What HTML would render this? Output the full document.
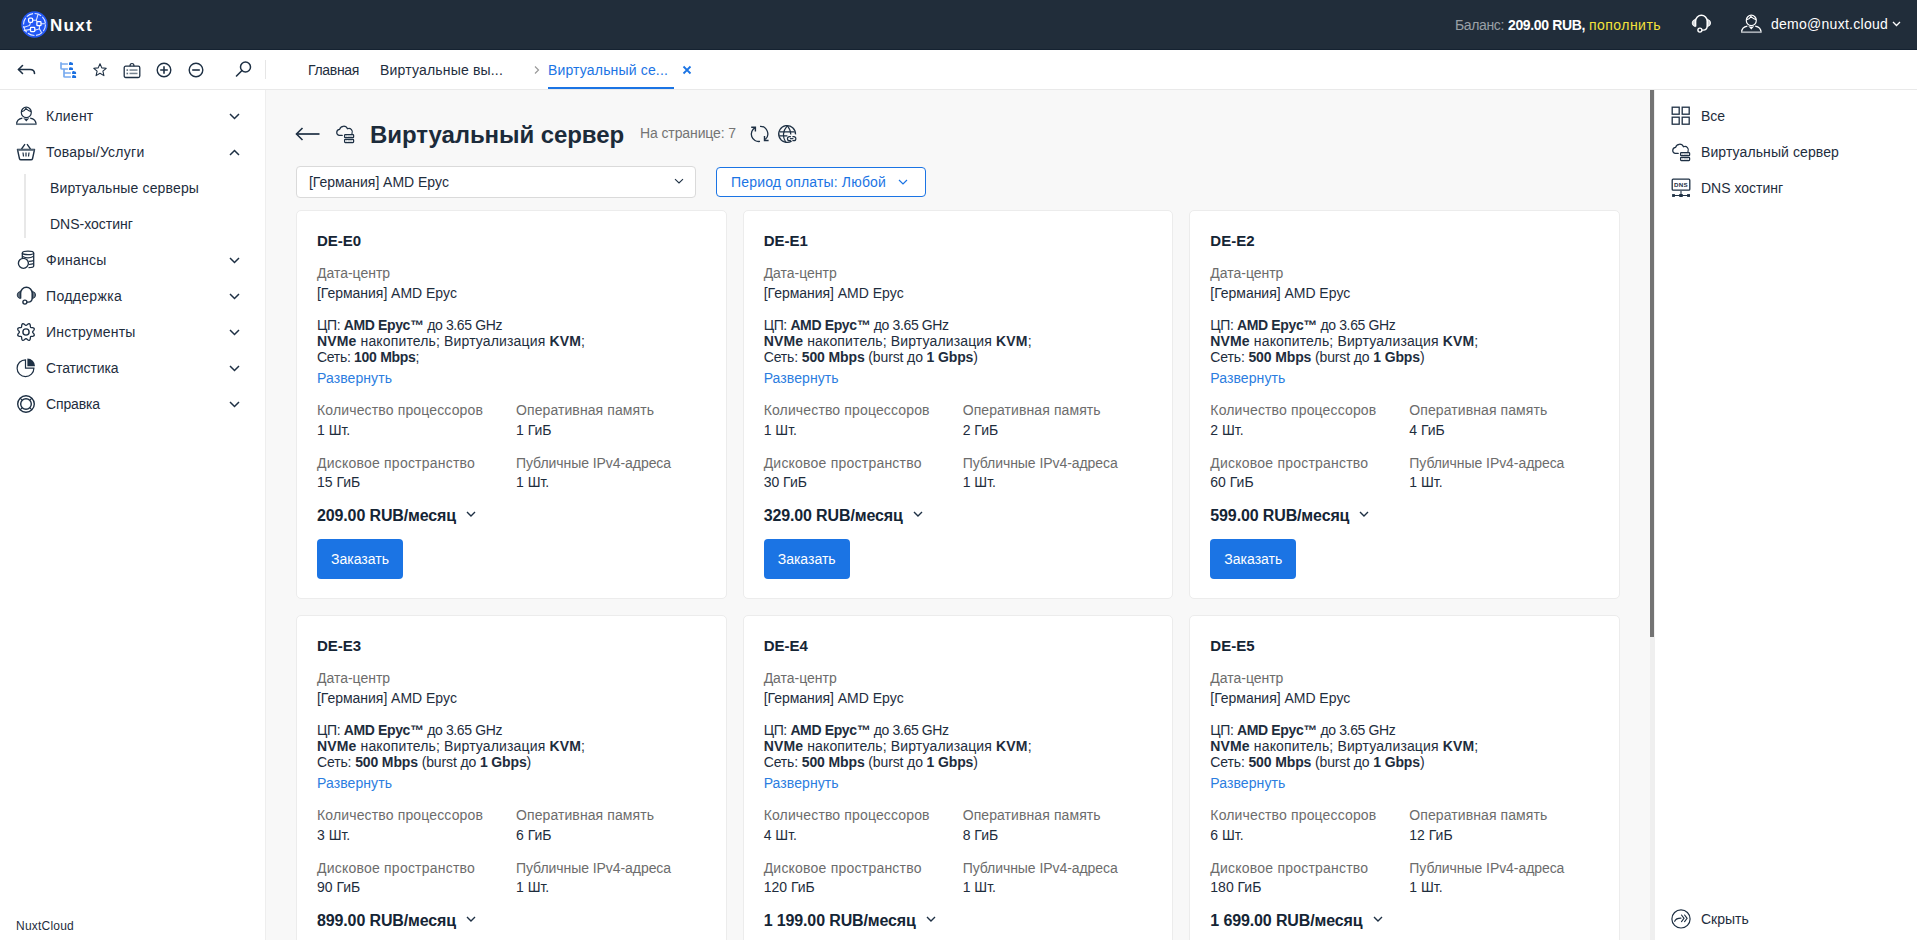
<!DOCTYPE html><html><head><meta charset="utf-8"><style>
*{box-sizing:border-box;margin:0;padding:0}
html,body{width:1917px;height:940px;overflow:hidden;background:#fff;font-family:"Liberation Sans",sans-serif;color:#1e2d3d;font-size:14px}
.abs{position:absolute}
.t{position:absolute;white-space:nowrap}
svg{position:absolute;overflow:visible}
b{font-weight:700}
</style></head><body>
<div class="abs" style="left:0px;top:0px;width:1917px;height:50px;background:#212d3a"></div>
<div class="abs" style="left:0px;top:49px;width:1917px;height:1px;background:#152231"></div>
<div class="abs" style="left:0px;top:50px;width:1917px;height:39px;background:#fff"></div>
<div class="abs" style="left:0px;top:89px;width:1917px;height:1px;background:#e9e9e9"></div>
<div class="abs" style="left:0px;top:90px;width:265px;height:850px;background:#fff"></div>
<div class="abs" style="left:265px;top:90px;width:1px;height:850px;background:#eeeeee"></div>
<div class="abs" style="left:266px;top:90px;width:1384px;height:850px;background:#f8f8f8"></div>
<div class="abs" style="left:1650px;top:90px;width:5px;height:850px;background:#efefef"></div>
<div class="abs" style="left:1650px;top:90px;width:4px;height:547px;background:#737373"></div>
<div class="abs" style="left:1655px;top:90px;width:262px;height:850px;background:#fff"></div>
<svg style="left:21px;top:11px;" width="27" height="27" viewBox="0 0 27 27"><circle cx="13.5" cy="13.5" r="13.2" fill="#2358f5"/><circle cx="13.5" cy="13.5" r="11" fill="none" stroke="#dfe6ff" stroke-width="1.1" stroke-dasharray="7 1.6"/><path d="M11.8 9.2 H15.3 L17.2 2.8 M15.3 9.2 L16.2 10.6 M20.1 12.7 H24.6 M18.4 14.8 V17.8 L20.5 21.5 M9.4 18.4 L2.8 19.6 M13.8 19.2 L17 18.3 L18.4 17.8 M9.6 11.4 L8.6 14.4 L2.4 16.6" stroke="#dfe6ff" stroke-width="1.1" fill="none"/><rect x="7.6" y="7.2" width="4.1" height="4.1" rx="1.2" fill="#2358f5" stroke="#fff" stroke-width="1.3"/><rect x="15.9" y="10.6" width="4.1" height="4.1" rx="0.8" fill="#2358f5" stroke="#fff" stroke-width="1.3"/><rect x="9.5" y="16.4" width="4.3" height="4.2" rx="0.8" fill="#2358f5" stroke="#fff" stroke-width="1.3"/></svg>
<div class="t" style="left:50px;top:17px;font-size:17px;line-height:17px;font-weight:700;color:#ffffff;letter-spacing:1.305px;">Nuxt</div>
<div class="t" style="left:1455px;top:18px;font-size:14px;line-height:14px;font-weight:400;color:#9aa0a6;letter-spacing:-0.364px;">Баланс:</div>
<div class="t" style="left:1508px;top:18px;font-size:14px;line-height:14px;font-weight:700;color:#ffffff;letter-spacing:-0.355px;">209.00 RUB,</div>
<div class="t" style="left:1589px;top:18px;font-size:14px;line-height:14px;font-weight:400;color:#f3e23b;letter-spacing:0.462px;">пополнить</div>
<svg style="left:1692px;top:15px;" width="19" height="18" viewBox="0 0 19 18"><path d="M3.6 11.6 V6.1 A5.8 5.8 0 0 1 15.2 6.1 V11.3" fill="none" stroke="#ffffff" stroke-width="1.5"/><path d="M3.3 4.4 Q0.2 5.1 0.2 8 Q0.2 10.9 3.3 11.6 Z M15.5 4.4 Q18.6 5.1 18.6 8 Q18.6 10.9 15.5 11.6 Z" fill="#d0d4d8" stroke="#ffffff" stroke-width="0.9"/><path d="M15.2 11 Q15.2 15.1 11.2 15.1 H10" fill="none" stroke="#ffffff" stroke-width="1.4"/><circle cx="7.9" cy="15.1" r="2" fill="none" stroke="#ffffff" stroke-width="1.4"/></svg>
<svg style="left:1741px;top:15px;" width="20" height="18" viewBox="0 0 20 18"><ellipse cx="10.3" cy="5.4" rx="5" ry="5.2" fill="none" stroke="#ffffff" stroke-width="1.2"/><path d="M5.8 4.6 Q8.6 4 9.8 1.4 Q12.2 3.9 15.2 4.6" fill="none" stroke="#ffffff" stroke-width="1.1"/><path d="M0.6 17.4 Q0.6 12 6.4 11.1 M14.2 11.1 Q20 12 20 17.4" fill="none" stroke="#ffffff" stroke-width="1.3"/><path d="M0.2 17.2 H20.4" stroke="#a7adb4" stroke-width="1.7"/><path d="M7.2 11.1 L10.3 14.6 L13.4 11.1 Q10.3 12.6 7.2 11.1 Z" fill="#ffffff"/></svg>
<div class="t" style="left:1771px;top:17px;font-size:14px;line-height:14px;font-weight:400;color:#ffffff;letter-spacing:0.266px;">demo@nuxt.cloud</div>
<svg style="left:1892px;top:21px;" width="9" height="6" viewBox="0 0 9 6"><path d="M1 1 L4.5 4.5 L8 1" fill="none" stroke="#fff" stroke-width="1.3"/></svg>
<svg style="left:16px;top:63px;" width="20" height="16" viewBox="0 0 20 16"><path d="M2.5 6.5 H14 Q18.5 6.5 18.5 10.5" fill="none" stroke="#1e3044" stroke-width="1.6" stroke-linecap="round"/><path d="M6.5 2.5 L2.5 6.5 L6.5 10.5" fill="none" stroke="#1e3044" stroke-width="1.6" stroke-linecap="round" stroke-linejoin="round"/></svg>
<svg style="left:56px;top:58px;" width="24" height="24" viewBox="0 0 24 24"><path d="M5 4.2 V10.2 Q5 11 6 11 H11.9 M5 6 H11.9 M8 11 V18.7 Q8 19 9 19 H14.9 M8 15 H14.9" fill="none" stroke="#78abef" stroke-width="1.7"/><path d="M13 6.8999999999999995 V5.3999999999999995 Q13 4.1 14.6 4.1 Q15.2 3.9999999999999996 15.6 4.5 Q17 4.5 17 5.699999999999999 V6.8999999999999995 Z" fill="#1a6fe0"/><path d="M13 12.0 V10.5 Q13 9.2 14.6 9.2 Q15.2 9.1 15.6 9.6 Q17 9.6 17 10.799999999999999 V12.0 Z" fill="#1a6fe0"/><path d="M16.1 15.899999999999999 V14.4 Q16.1 13.1 17.700000000000003 13.1 Q18.3 13.0 18.700000000000003 13.5 Q20.1 13.5 20.1 14.7 V15.899999999999999 Z" fill="#1a6fe0"/><path d="M16.1 19.900000000000002 V18.400000000000002 Q16.1 17.1 17.700000000000003 17.1 Q18.3 17.0 18.700000000000003 17.5 Q20.1 17.5 20.1 18.700000000000003 V19.900000000000002 Z" fill="#1a6fe0"/></svg>
<svg style="left:92px;top:62px;" width="16" height="16" viewBox="0 0 16 16"><path d="M8 1.8 L9.8 5.9 L14.2 6.3 L10.9 9.2 L11.9 13.6 L8 11.3 L4.1 13.6 L5.1 9.2 L1.8 6.3 L6.2 5.9 Z" fill="none" stroke="#1e3044" stroke-width="1.1" stroke-linejoin="round"/></svg>
<svg style="left:123px;top:62px;" width="18" height="17" viewBox="0 0 18 17"><rect x="1.2" y="4.2" width="15.6" height="11.3" rx="1.5" fill="none" stroke="#1e3044" stroke-width="1.3"/><path d="M7 4.2 Q7 1.5 9 1.5 Q11 1.5 11 4.2" fill="none" stroke="#1e3044" stroke-width="1.2"/><rect x="3.5" y="7.3" width="1.6" height="1.6" fill="#5b6b7a"/><rect x="3.5" y="10.7" width="1.6" height="1.6" fill="#5b6b7a"/><rect x="6.5" y="7.3" width="8" height="1.5" fill="#76838f"/><rect x="6.5" y="10.7" width="8" height="1.5" fill="#76838f"/></svg>
<svg style="left:156px;top:62px;" width="16" height="16" viewBox="0 0 16 16"><circle cx="8" cy="8" r="6.8" fill="none" stroke="#1e3044" stroke-width="1.4"/><path d="M4.2 8 H11.8 M8 4.2 V11.8" stroke="#1e3044" stroke-width="1.6"/></svg>
<svg style="left:188px;top:62px;" width="16" height="16" viewBox="0 0 16 16"><circle cx="8" cy="8" r="6.8" fill="none" stroke="#1e3044" stroke-width="1.4"/><path d="M4.2 8 H11.8" stroke="#1e3044" stroke-width="1.6"/></svg>
<svg style="left:235px;top:60px;" width="18" height="18" viewBox="0 0 18 18"><circle cx="10.5" cy="7" r="5" fill="none" stroke="#1e3044" stroke-width="1.5"/><path d="M7 10.5 L1.5 16" stroke="#1e3044" stroke-width="1.6" stroke-linecap="round"/></svg>
<div class="abs" style="left:265px;top:60px;width:1px;height:19px;background:#e6e6e6"></div>
<div class="t" style="left:308px;top:63px;font-size:14px;line-height:14px;font-weight:400;color:#1e2d3d;letter-spacing:-0.326px;">Главная</div>
<div class="t" style="left:380px;top:63px;font-size:14px;line-height:14px;font-weight:400;color:#1e2d3d;letter-spacing:0.180px;">Виртуальные вы...</div>
<svg style="left:533px;top:65px;" width="8" height="10" viewBox="0 0 8 10"><path d="M2 1.5 L5.5 5 L2 8.5" fill="none" stroke="#9a9a9a" stroke-width="1.2"/></svg>
<div class="t" style="left:548px;top:63px;font-size:14px;line-height:14px;font-weight:400;color:#1b74e4;letter-spacing:0.161px;">Виртуальный се...</div>
<svg style="left:682px;top:65px;" width="10" height="10" viewBox="0 0 10 10"><path d="M1.5 1.5 L8.5 8.5 M8.5 1.5 L1.5 8.5" stroke="#1b74e4" stroke-width="1.8"/></svg>
<div class="abs" style="left:548px;top:87px;width:126px;height:2px;background:#1b74e4"></div>
<div class="t" style="left:46px;top:109px;font-size:14px;line-height:14px;font-weight:400;color:#1e2d3d;letter-spacing:0.237px;">Клиент</div>
<div class="t" style="left:46px;top:145px;font-size:14px;line-height:14px;font-weight:400;color:#1e2d3d;letter-spacing:0.262px;">Товары/Услуги</div>
<div class="t" style="left:46px;top:253px;font-size:14px;line-height:14px;font-weight:400;color:#1e2d3d;letter-spacing:0.246px;">Финансы</div>
<div class="t" style="left:46px;top:289px;font-size:14px;line-height:14px;font-weight:400;color:#1e2d3d;letter-spacing:0.332px;">Поддержка</div>
<div class="t" style="left:46px;top:325px;font-size:14px;line-height:14px;font-weight:400;color:#1e2d3d;letter-spacing:0.202px;">Инструменты</div>
<div class="t" style="left:46px;top:361px;font-size:14px;line-height:14px;font-weight:400;color:#1e2d3d;letter-spacing:-0.102px;">Статистика</div>
<div class="t" style="left:46px;top:397px;font-size:14px;line-height:14px;font-weight:400;color:#1e2d3d;letter-spacing:-0.129px;">Справка</div>
<svg style="left:229px;top:113px;" width="11" height="7" viewBox="0 0 11 7"><path d="M1 1 L5.5 5.5 L10 1" fill="none" stroke="#1e3044" stroke-width="1.5"/></svg>
<svg style="left:229px;top:257px;" width="11" height="7" viewBox="0 0 11 7"><path d="M1 1 L5.5 5.5 L10 1" fill="none" stroke="#1e3044" stroke-width="1.5"/></svg>
<svg style="left:229px;top:293px;" width="11" height="7" viewBox="0 0 11 7"><path d="M1 1 L5.5 5.5 L10 1" fill="none" stroke="#1e3044" stroke-width="1.5"/></svg>
<svg style="left:229px;top:329px;" width="11" height="7" viewBox="0 0 11 7"><path d="M1 1 L5.5 5.5 L10 1" fill="none" stroke="#1e3044" stroke-width="1.5"/></svg>
<svg style="left:229px;top:365px;" width="11" height="7" viewBox="0 0 11 7"><path d="M1 1 L5.5 5.5 L10 1" fill="none" stroke="#1e3044" stroke-width="1.5"/></svg>
<svg style="left:229px;top:401px;" width="11" height="7" viewBox="0 0 11 7"><path d="M1 1 L5.5 5.5 L10 1" fill="none" stroke="#1e3044" stroke-width="1.5"/></svg>
<svg style="left:229px;top:149px;" width="11" height="7" viewBox="0 0 11 7"><path d="M1 6 L5.5 1.5 L10 6" fill="none" stroke="#1e3044" stroke-width="1.5"/></svg>
<div class="abs" style="left:24px;top:174px;width:2px;height:64px;background:#e8e8e8"></div>
<div class="t" style="left:50px;top:181px;font-size:14px;line-height:14px;font-weight:400;color:#1e2d3d;letter-spacing:0.146px;">Виртуальные серверы</div>
<div class="t" style="left:50px;top:217px;font-size:14px;line-height:14px;font-weight:400;color:#1e2d3d;">DNS-хостинг</div>
<div class="t" style="left:16px;top:920px;font-size:12px;line-height:12px;font-weight:400;color:#1e2d3d;letter-spacing:0.219px;">NuxtCloud</div>
<svg style="left:16px;top:107px;" width="20" height="18" viewBox="0 0 20 18"><ellipse cx="10.3" cy="5.4" rx="5" ry="5.2" fill="none" stroke="#1e3044" stroke-width="1.2"/><path d="M5.8 4.6 Q8.6 4 9.8 1.4 Q12.2 3.9 15.2 4.6" fill="none" stroke="#1e3044" stroke-width="1.1"/><path d="M0.6 17.4 Q0.6 12 6.4 11.1 M14.2 11.1 Q20 12 20 17.4" fill="none" stroke="#1e3044" stroke-width="1.3"/><path d="M0.2 17.2 H20.4" stroke="#5e6e7d" stroke-width="1.7"/><path d="M7.2 11.1 L10.3 14.6 L13.4 11.1 Q10.3 12.6 7.2 11.1 Z" fill="#1e3044"/></svg>
<svg style="left:16px;top:143px;" width="20" height="18" viewBox="0 0 20 18"><path d="M5.5 6 L9 1.2 M14.5 6 L11 1.2" stroke="#1e3044" stroke-width="1.3"/><path d="M1.5 6.5 H18.5 L16.5 15.8 Q16.2 16.8 15 16.8 H5 Q3.8 16.8 3.5 15.8 Z" fill="none" stroke="#1e3044" stroke-width="1.4" stroke-linejoin="round"/><path d="M1.5 7 H18.5" stroke="#5e6e7d" stroke-width="1.6"/><path d="M7 9.5 L7.5 13.5 M10 9.5 V13.5 M13 9.5 L12.5 13.5" stroke="#1e3044" stroke-width="1.2"/></svg>
<svg style="left:16px;top:250px;" width="20" height="20" viewBox="0 0 20 20"><ellipse cx="12" cy="2.9" rx="5.7" ry="1.8" fill="none" stroke="#1e3044" stroke-width="1.3"/><path d="M6.3 2.9 V8.2 M17.7 2.9 V16 Q17.7 17.6 12.5 17.6" fill="none" stroke="#1e3044" stroke-width="1.3"/><path d="M6.3 6.2 Q12 9.6 17.7 6.2 M12.8 11.4 Q15.5 11.2 17.7 10.6 M13 14.5 Q15.5 14.3 17.7 13.7" fill="none" stroke="#1e3044" stroke-width="1.2"/><circle cx="7.4" cy="13.3" r="5" fill="#fff" stroke="#1e3044" stroke-width="1.35"/></svg>
<svg style="left:17px;top:287px;" width="19" height="18" viewBox="0 0 19 18"><path d="M3.6 11.6 V6.1 A5.8 5.8 0 0 1 15.2 6.1 V11.3" fill="none" stroke="#1e3044" stroke-width="1.5"/><path d="M3.3 4.4 Q0.2 5.1 0.2 8 Q0.2 10.9 3.3 11.6 Z M15.5 4.4 Q18.6 5.1 18.6 8 Q18.6 10.9 15.5 11.6 Z" fill="#66737f" stroke="#1e3044" stroke-width="0.9"/><path d="M15.2 11 Q15.2 15.1 11.2 15.1 H10" fill="none" stroke="#1e3044" stroke-width="1.4"/><circle cx="7.9" cy="15.1" r="2" fill="none" stroke="#1e3044" stroke-width="1.4"/></svg>
<svg style="left:16px;top:322px;" width="20" height="20" viewBox="0 0 20 20"><path d="M16.60 10.00 L16.69 10.35 L16.94 10.73 L17.30 11.16 L17.70 11.64 L18.04 12.15 L18.26 12.68 L18.29 13.18 L18.11 13.61 L17.73 13.94 L17.21 14.16 L16.60 14.29 L15.98 14.35 L15.42 14.39 L14.98 14.48 L14.67 14.67 L14.48 14.98 L14.39 15.42 L14.35 15.98 L14.29 16.60 L14.16 17.21 L13.94 17.73 L13.61 18.11 L13.18 18.29 L12.68 18.26 L12.15 18.04 L11.64 17.70 L11.16 17.30 L10.73 16.94 L10.35 16.69 L10.00 16.60 L9.65 16.69 L9.27 16.94 L8.84 17.30 L8.36 17.70 L7.85 18.04 L7.32 18.26 L6.82 18.29 L6.39 18.11 L6.06 17.73 L5.84 17.21 L5.71 16.60 L5.65 15.98 L5.61 15.42 L5.52 14.98 L5.33 14.67 L5.02 14.48 L4.58 14.39 L4.02 14.35 L3.40 14.29 L2.79 14.16 L2.27 13.94 L1.89 13.61 L1.71 13.18 L1.74 12.68 L1.96 12.15 L2.30 11.64 L2.70 11.16 L3.06 10.73 L3.31 10.35 L3.40 10.00 L3.31 9.65 L3.06 9.27 L2.70 8.84 L2.30 8.36 L1.96 7.85 L1.74 7.32 L1.71 6.82 L1.89 6.39 L2.27 6.06 L2.79 5.84 L3.40 5.71 L4.02 5.65 L4.58 5.61 L5.02 5.52 L5.33 5.33 L5.52 5.02 L5.61 4.58 L5.65 4.02 L5.71 3.40 L5.84 2.79 L6.06 2.27 L6.39 1.89 L6.82 1.71 L7.32 1.74 L7.85 1.96 L8.36 2.30 L8.84 2.70 L9.27 3.06 L9.65 3.31 L10.00 3.40 L10.35 3.31 L10.73 3.06 L11.16 2.70 L11.64 2.30 L12.15 1.96 L12.68 1.74 L13.18 1.71 L13.61 1.89 L13.94 2.27 L14.16 2.79 L14.29 3.40 L14.35 4.02 L14.39 4.58 L14.48 5.02 L14.67 5.33 L14.98 5.52 L15.42 5.61 L15.98 5.65 L16.60 5.71 L17.21 5.84 L17.73 6.06 L18.11 6.39 L18.29 6.82 L18.26 7.32 L18.04 7.85 L17.70 8.36 L17.30 8.84 L16.94 9.27 L16.69 9.65 L16.60 10.00 Z" fill="none" stroke="#1e3044" stroke-width="1.3" stroke-linejoin="round"/><circle cx="10" cy="10" r="3.1" fill="none" stroke="#1e3044" stroke-width="1.4"/></svg>
<svg style="left:16px;top:358px;" width="20" height="20" viewBox="0 0 20 20"><path d="M9.5 1.8 A8.4 8.4 0 1 0 17.9 10.2 H9.5 Z" fill="none" stroke="#1e3044" stroke-width="1.2"/><path d="M11.4 0.6 A7.6 7.6 0 0 1 19 8.2 H11.4 Z" fill="#1e3044"/></svg>
<svg style="left:16px;top:394px;" width="20" height="20" viewBox="0 0 20 20"><circle cx="10" cy="10" r="8.3" fill="none" stroke="#1e3044" stroke-width="1.4"/><circle cx="10" cy="10" r="5.3" fill="none" stroke="#1e3044" stroke-width="1.4"/><path d="M4.1 4.1 L6.3 6.3 M15.9 4.1 L13.7 6.3 M4.1 15.9 L6.3 13.7 M15.9 15.9 L13.7 13.7" stroke="#1e3044" stroke-width="1.2"/></svg>
<svg style="left:1671px;top:106px;" width="20" height="20" viewBox="0 0 20 20"><rect x="1.2" y="1.2" width="7" height="7" fill="none" stroke="#1e3044" stroke-width="1.3"/><rect x="11.2" y="1.2" width="7" height="7" fill="none" stroke="#1e3044" stroke-width="1.3"/><rect x="1.2" y="11.2" width="7" height="7" fill="none" stroke="#1e3044" stroke-width="1.3"/><rect x="11.2" y="11.2" width="7" height="7" fill="none" stroke="#1e3044" stroke-width="1.3"/></svg>
<div class="t" style="left:1701px;top:109px;font-size:14px;line-height:14px;font-weight:400;color:#1e2d3d;">Все</div>
<svg style="left:1672px;top:143px;" width="18" height="18" viewBox="0 0 18 18"><path d="M6.2 10.4 H3.1 A3.1 3.1 0 0 1 3.6 4.3 A4.2 4.2 0 0 1 11.5 3.8 A3.5 3.5 0 0 1 16 8.6" fill="none" stroke="#1e3044" stroke-width="1.25" stroke-linecap="round"/><rect x="8.6" y="9.5" width="9" height="3.1" rx="0.7" fill="#fff" stroke="#1e3044" stroke-width="1.25"/><rect x="8.6" y="14.4" width="9" height="3.1" rx="0.7" fill="#fff" stroke="#1e3044" stroke-width="1.25"/><path d="M11.5 11.05 H16.5 M11.5 15.95 H16.5" stroke="#9aa4ae" stroke-width="1"/><path d="M9.9 11.05 H10.6 M9.9 15.95 H10.6" stroke="#5f6d7a" stroke-width="1"/></svg>
<div class="t" style="left:1701px;top:145px;font-size:14px;line-height:14px;font-weight:400;color:#1e2d3d;letter-spacing:0.099px;">Виртуальный сервер</div>
<svg style="left:1671px;top:178px;" width="20" height="20" viewBox="0 0 20 20"><rect x="1.2" y="1.2" width="17.6" height="11" rx="1" fill="none" stroke="#1e3044" stroke-width="1.3"/><text x="10" y="9" font-size="6.2" font-weight="700" text-anchor="middle" fill="#1e3044" font-family="Liberation Sans" letter-spacing="0.3">DNS</text><path d="M10 13 V17 M2 17.5 H18" stroke="#1e3044" stroke-width="1.1"/><rect x="1.1" y="16.1" width="2.8" height="2.8" fill="#1e3044"/><rect x="8" y="16.1" width="4" height="2.8" rx="1" fill="#1e3044"/><rect x="16.1" y="16.1" width="2.9" height="2.8" fill="#1e3044"/></svg>
<div class="t" style="left:1701px;top:181px;font-size:14px;line-height:14px;font-weight:400;color:#1e2d3d;">DNS хостинг</div>
<svg style="left:1671px;top:909px;" width="20" height="20" viewBox="0 0 20 20"><circle cx="10" cy="9.9" r="9.1" fill="none" stroke="#1e3044" stroke-width="1.2"/><path d="M3.7 12.3 Q5 9.2 9.9 9.2" fill="none" stroke="#1e3044" stroke-width="1.2" stroke-linecap="round"/><path d="M10.5 6 L13 9.3 L10.5 12.6 M13.6 6 L16.1 9.3 L13.6 12.6" fill="none" stroke="#1e3044" stroke-width="1.15" stroke-linecap="round"/></svg>
<div class="t" style="left:1701px;top:912px;font-size:14px;line-height:14px;font-weight:400;color:#1e2d3d;">Скрыть</div>
<svg style="left:295px;top:127px;" width="26" height="14" viewBox="0 0 26 14"><path d="M1.5 7 H24.5" stroke="#1e3044" stroke-width="1.7"/><path d="M7.5 1 L1.5 7 L7.5 13" fill="none" stroke="#1e3044" stroke-width="1.6" stroke-linejoin="miter"/></svg>
<svg style="left:336px;top:125px;" width="18" height="18" viewBox="0 0 18 18"><path d="M6.2 10.4 H3.1 A3.1 3.1 0 0 1 3.6 4.3 A4.2 4.2 0 0 1 11.5 3.8 A3.5 3.5 0 0 1 16 8.6" fill="none" stroke="#1e3044" stroke-width="1.25" stroke-linecap="round"/><rect x="8.6" y="9.5" width="9" height="3.1" rx="0.7" fill="#fff" stroke="#1e3044" stroke-width="1.25"/><rect x="8.6" y="14.4" width="9" height="3.1" rx="0.7" fill="#fff" stroke="#1e3044" stroke-width="1.25"/><path d="M11.5 11.05 H16.5 M11.5 15.95 H16.5" stroke="#9aa4ae" stroke-width="1"/><path d="M9.9 11.05 H10.6 M9.9 15.95 H10.6" stroke="#5f6d7a" stroke-width="1"/></svg>
<div class="t" style="left:370px;top:123px;font-size:24px;line-height:24px;font-weight:700;color:#1c2b3a;letter-spacing:-0.075px;">Виртуальный сервер</div>
<div class="t" style="left:640px;top:126px;font-size:14px;line-height:14px;font-weight:400;color:#747474;letter-spacing:-0.108px;">На странице: 7</div>
<svg style="left:746px;top:120px;" width="28" height="28" viewBox="0 0 28 28"><path d="M9.2 7.6 A7.4 7.4 0 0 0 14 21.4" fill="none" stroke="#1e3044" stroke-width="1.3"/><path d="M14 6.3 A7.6 7.6 0 0 1 19.2 19.6" fill="none" stroke="#1e3044" stroke-width="1.3"/><path d="M5.2 7.3 H9.4 V11.4" fill="none" stroke="#1e3044" stroke-width="1.4"/><path d="M18.5 16 V20.5 H22.6" fill="none" stroke="#1e3044" stroke-width="1.4"/></svg>
<svg style="left:774px;top:120px;" width="28" height="28" viewBox="0 0 28 28"><path d="M17.6 21.1 A8.4 8.4 0 1 1 21.5 14.4" fill="none" stroke="#1e3044" stroke-width="1.3"/><path d="M13.3 5.6 Q6.6 13.8 11.6 22 M13.3 5.6 Q16.6 9.5 16.8 14.6" fill="none" stroke="#1e3044" stroke-width="1.2"/><path d="M5.8 11.9 H20.6 M5.4 15.8 H13.4" stroke="#1e3044" stroke-width="1.2"/><path d="M16.9 16.7 H15.4 A1.95 1.95 0 0 0 15.4 20.6 H16.9 M18.4 16.7 H19.9 A1.95 1.95 0 0 1 19.9 20.6 H18.4" fill="none" stroke="#1e3044" stroke-width="1.2"/><path d="M15.9 18.65 H19.4" stroke="#1e3044" stroke-width="1.2"/></svg>
<div class="abs" style="left:296px;top:166px;width:400px;height:32px;background:#fff;border:1px solid #dadada;border-radius:4px"></div>
<div class="t" style="left:309px;top:175px;font-size:14px;line-height:14px;font-weight:400;color:#1e2d3d;letter-spacing:-0.029px;">[Германия] AMD Epyc</div>
<svg style="left:674px;top:178px;" width="10" height="7" viewBox="0 0 10 7"><path d="M1 1.2 L5 5 L9 1.2" fill="none" stroke="#1e3044" stroke-width="1.1"/></svg>
<div class="abs" style="left:716px;top:167px;width:210px;height:30px;background:#fff;border:1px solid #1b74e4;border-radius:4px"></div>
<div class="t" style="left:731px;top:175px;font-size:14px;line-height:14px;font-weight:400;color:#1b74e4;letter-spacing:0.173px;">Период оплаты: Любой</div>
<svg style="left:898px;top:179px;" width="10" height="6" viewBox="0 0 10 6"><path d="M1 1 L5 5 L9 1" fill="none" stroke="#1b74e4" stroke-width="1.2"/></svg>
<div class="abs" style="left:296.0px;top:210px;width:430.67px;height:389px;background:#fff;border:1px solid #ececec;border-radius:5px"></div>
<div class="t" style="left:317.0px;top:233px;font-size:15px;line-height:15px;font-weight:700;color:#152535;">DE-E0</div>
<div class="t" style="left:317.0px;top:266px;font-size:14px;line-height:14px;font-weight:400;color:#6c6c6c;letter-spacing:-0.020px;">Дата-центр</div>
<div class="t" style="left:317.0px;top:286px;font-size:14px;line-height:14px;font-weight:400;color:#1e2d3d;letter-spacing:-0.029px;">[Германия] AMD Epyc</div>
<div class="t" style="left:317.0px;top:318px;font-size:14px;line-height:14px;font-weight:400;color:#1e2d3d;letter-spacing:-0.371px;">ЦП: <b>AMD Epyc™</b> до 3.65 GHz</div>
<div class="t" style="left:317.0px;top:334px;font-size:14px;line-height:14px;font-weight:400;color:#1e2d3d;letter-spacing:0.145px;"><b>NVMe</b> накопитель; Виртуализация <b>KVM</b>;</div>
<div class="t" style="left:317.0px;top:350px;font-size:14px;line-height:14px;font-weight:400;color:#1e2d3d;letter-spacing:-0.304px;">Сеть: <b>100 Mbps</b>;</div>
<div class="t" style="left:317.0px;top:371px;font-size:14px;line-height:14px;font-weight:400;color:#2b7de0;letter-spacing:0.080px;">Развернуть</div>
<div class="t" style="left:317.0px;top:403px;font-size:14px;line-height:14px;font-weight:400;color:#6c6c6c;letter-spacing:0.146px;">Количество процессоров</div>
<div class="t" style="left:516.0px;top:403px;font-size:14px;line-height:14px;font-weight:400;color:#6c6c6c;letter-spacing:0.088px;">Оперативная память</div>
<div class="t" style="left:317.0px;top:423px;font-size:14px;line-height:14px;font-weight:400;color:#1e2d3d;">1 Шт.</div>
<div class="t" style="left:516.0px;top:423px;font-size:14px;line-height:14px;font-weight:400;color:#1e2d3d;">1 ГиБ</div>
<div class="t" style="left:317.0px;top:456px;font-size:14px;line-height:14px;font-weight:400;color:#6c6c6c;letter-spacing:0.218px;">Дисковое пространство</div>
<div class="t" style="left:516.0px;top:456px;font-size:14px;line-height:14px;font-weight:400;color:#6c6c6c;letter-spacing:-0.064px;">Публичные IPv4-адреса</div>
<div class="t" style="left:317.0px;top:475px;font-size:14px;line-height:14px;font-weight:400;color:#1e2d3d;">15 ГиБ</div>
<div class="t" style="left:516.0px;top:475px;font-size:14px;line-height:14px;font-weight:400;color:#1e2d3d;">1 Шт.</div>
<div class="t" style="left:317.0px;top:508px;font-size:16px;line-height:16px;font-weight:700;color:#152535;letter-spacing:-0.132px;">209.00 RUB/месяц</div>
<svg style="left:466.1px;top:511px;" width="10" height="7" viewBox="0 0 10 7"><path d="M1 1 L5 5 L9 1" fill="none" stroke="#1e3044" stroke-width="1.4"/></svg>
<div class="abs" style="left:317.0px;top:539px;width:86px;height:40px;background:#1b74e4;border-radius:4px"></div>
<div class="t" style="left:331.0px;top:552px;font-size:14px;line-height:14px;font-weight:400;color:#ffffff;letter-spacing:0.014px;">Заказать</div>
<div class="abs" style="left:742.67px;top:210px;width:430.67px;height:389px;background:#fff;border:1px solid #ececec;border-radius:5px"></div>
<div class="t" style="left:763.67px;top:233px;font-size:15px;line-height:15px;font-weight:700;color:#152535;">DE-E1</div>
<div class="t" style="left:763.67px;top:266px;font-size:14px;line-height:14px;font-weight:400;color:#6c6c6c;letter-spacing:-0.020px;">Дата-центр</div>
<div class="t" style="left:763.67px;top:286px;font-size:14px;line-height:14px;font-weight:400;color:#1e2d3d;letter-spacing:-0.029px;">[Германия] AMD Epyc</div>
<div class="t" style="left:763.67px;top:318px;font-size:14px;line-height:14px;font-weight:400;color:#1e2d3d;letter-spacing:-0.371px;">ЦП: <b>AMD Epyc™</b> до 3.65 GHz</div>
<div class="t" style="left:763.67px;top:334px;font-size:14px;line-height:14px;font-weight:400;color:#1e2d3d;letter-spacing:0.145px;"><b>NVMe</b> накопитель; Виртуализация <b>KVM</b>;</div>
<div class="t" style="left:763.67px;top:350px;font-size:14px;line-height:14px;font-weight:400;color:#1e2d3d;letter-spacing:-0.130px;">Сеть: <b>500 Mbps</b> (burst до <b>1 Gbps</b>)</div>
<div class="t" style="left:763.67px;top:371px;font-size:14px;line-height:14px;font-weight:400;color:#2b7de0;letter-spacing:0.080px;">Развернуть</div>
<div class="t" style="left:763.67px;top:403px;font-size:14px;line-height:14px;font-weight:400;color:#6c6c6c;letter-spacing:0.146px;">Количество процессоров</div>
<div class="t" style="left:962.67px;top:403px;font-size:14px;line-height:14px;font-weight:400;color:#6c6c6c;letter-spacing:0.088px;">Оперативная память</div>
<div class="t" style="left:763.67px;top:423px;font-size:14px;line-height:14px;font-weight:400;color:#1e2d3d;">1 Шт.</div>
<div class="t" style="left:962.67px;top:423px;font-size:14px;line-height:14px;font-weight:400;color:#1e2d3d;">2 ГиБ</div>
<div class="t" style="left:763.67px;top:456px;font-size:14px;line-height:14px;font-weight:400;color:#6c6c6c;letter-spacing:0.218px;">Дисковое пространство</div>
<div class="t" style="left:962.67px;top:456px;font-size:14px;line-height:14px;font-weight:400;color:#6c6c6c;letter-spacing:-0.064px;">Публичные IPv4-адреса</div>
<div class="t" style="left:763.67px;top:475px;font-size:14px;line-height:14px;font-weight:400;color:#1e2d3d;">30 ГиБ</div>
<div class="t" style="left:962.67px;top:475px;font-size:14px;line-height:14px;font-weight:400;color:#1e2d3d;">1 Шт.</div>
<div class="t" style="left:763.67px;top:508px;font-size:16px;line-height:16px;font-weight:700;color:#152535;letter-spacing:-0.132px;">329.00 RUB/месяц</div>
<svg style="left:912.77px;top:511px;" width="10" height="7" viewBox="0 0 10 7"><path d="M1 1 L5 5 L9 1" fill="none" stroke="#1e3044" stroke-width="1.4"/></svg>
<div class="abs" style="left:763.67px;top:539px;width:86px;height:40px;background:#1b74e4;border-radius:4px"></div>
<div class="t" style="left:777.67px;top:552px;font-size:14px;line-height:14px;font-weight:400;color:#ffffff;letter-spacing:0.014px;">Заказать</div>
<div class="abs" style="left:1189.34px;top:210px;width:430.67px;height:389px;background:#fff;border:1px solid #ececec;border-radius:5px"></div>
<div class="t" style="left:1210.34px;top:233px;font-size:15px;line-height:15px;font-weight:700;color:#152535;">DE-E2</div>
<div class="t" style="left:1210.34px;top:266px;font-size:14px;line-height:14px;font-weight:400;color:#6c6c6c;letter-spacing:-0.020px;">Дата-центр</div>
<div class="t" style="left:1210.34px;top:286px;font-size:14px;line-height:14px;font-weight:400;color:#1e2d3d;letter-spacing:-0.029px;">[Германия] AMD Epyc</div>
<div class="t" style="left:1210.34px;top:318px;font-size:14px;line-height:14px;font-weight:400;color:#1e2d3d;letter-spacing:-0.371px;">ЦП: <b>AMD Epyc™</b> до 3.65 GHz</div>
<div class="t" style="left:1210.34px;top:334px;font-size:14px;line-height:14px;font-weight:400;color:#1e2d3d;letter-spacing:0.145px;"><b>NVMe</b> накопитель; Виртуализация <b>KVM</b>;</div>
<div class="t" style="left:1210.34px;top:350px;font-size:14px;line-height:14px;font-weight:400;color:#1e2d3d;letter-spacing:-0.130px;">Сеть: <b>500 Mbps</b> (burst до <b>1 Gbps</b>)</div>
<div class="t" style="left:1210.34px;top:371px;font-size:14px;line-height:14px;font-weight:400;color:#2b7de0;letter-spacing:0.080px;">Развернуть</div>
<div class="t" style="left:1210.34px;top:403px;font-size:14px;line-height:14px;font-weight:400;color:#6c6c6c;letter-spacing:0.146px;">Количество процессоров</div>
<div class="t" style="left:1409.34px;top:403px;font-size:14px;line-height:14px;font-weight:400;color:#6c6c6c;letter-spacing:0.088px;">Оперативная память</div>
<div class="t" style="left:1210.34px;top:423px;font-size:14px;line-height:14px;font-weight:400;color:#1e2d3d;">2 Шт.</div>
<div class="t" style="left:1409.34px;top:423px;font-size:14px;line-height:14px;font-weight:400;color:#1e2d3d;">4 ГиБ</div>
<div class="t" style="left:1210.34px;top:456px;font-size:14px;line-height:14px;font-weight:400;color:#6c6c6c;letter-spacing:0.218px;">Дисковое пространство</div>
<div class="t" style="left:1409.34px;top:456px;font-size:14px;line-height:14px;font-weight:400;color:#6c6c6c;letter-spacing:-0.064px;">Публичные IPv4-адреса</div>
<div class="t" style="left:1210.34px;top:475px;font-size:14px;line-height:14px;font-weight:400;color:#1e2d3d;">60 ГиБ</div>
<div class="t" style="left:1409.34px;top:475px;font-size:14px;line-height:14px;font-weight:400;color:#1e2d3d;">1 Шт.</div>
<div class="t" style="left:1210.34px;top:508px;font-size:16px;line-height:16px;font-weight:700;color:#152535;letter-spacing:-0.132px;">599.00 RUB/месяц</div>
<svg style="left:1359.44px;top:511px;" width="10" height="7" viewBox="0 0 10 7"><path d="M1 1 L5 5 L9 1" fill="none" stroke="#1e3044" stroke-width="1.4"/></svg>
<div class="abs" style="left:1210.34px;top:539px;width:86px;height:40px;background:#1b74e4;border-radius:4px"></div>
<div class="t" style="left:1224.34px;top:552px;font-size:14px;line-height:14px;font-weight:400;color:#ffffff;letter-spacing:0.014px;">Заказать</div>
<div class="abs" style="left:296.0px;top:615px;width:430.67px;height:389px;background:#fff;border:1px solid #ececec;border-radius:5px"></div>
<div class="t" style="left:317.0px;top:638px;font-size:15px;line-height:15px;font-weight:700;color:#152535;">DE-E3</div>
<div class="t" style="left:317.0px;top:671px;font-size:14px;line-height:14px;font-weight:400;color:#6c6c6c;letter-spacing:-0.020px;">Дата-центр</div>
<div class="t" style="left:317.0px;top:691px;font-size:14px;line-height:14px;font-weight:400;color:#1e2d3d;letter-spacing:-0.029px;">[Германия] AMD Epyc</div>
<div class="t" style="left:317.0px;top:723px;font-size:14px;line-height:14px;font-weight:400;color:#1e2d3d;letter-spacing:-0.371px;">ЦП: <b>AMD Epyc™</b> до 3.65 GHz</div>
<div class="t" style="left:317.0px;top:739px;font-size:14px;line-height:14px;font-weight:400;color:#1e2d3d;letter-spacing:0.145px;"><b>NVMe</b> накопитель; Виртуализация <b>KVM</b>;</div>
<div class="t" style="left:317.0px;top:755px;font-size:14px;line-height:14px;font-weight:400;color:#1e2d3d;letter-spacing:-0.130px;">Сеть: <b>500 Mbps</b> (burst до <b>1 Gbps</b>)</div>
<div class="t" style="left:317.0px;top:776px;font-size:14px;line-height:14px;font-weight:400;color:#2b7de0;letter-spacing:0.080px;">Развернуть</div>
<div class="t" style="left:317.0px;top:808px;font-size:14px;line-height:14px;font-weight:400;color:#6c6c6c;letter-spacing:0.146px;">Количество процессоров</div>
<div class="t" style="left:516.0px;top:808px;font-size:14px;line-height:14px;font-weight:400;color:#6c6c6c;letter-spacing:0.088px;">Оперативная память</div>
<div class="t" style="left:317.0px;top:828px;font-size:14px;line-height:14px;font-weight:400;color:#1e2d3d;">3 Шт.</div>
<div class="t" style="left:516.0px;top:828px;font-size:14px;line-height:14px;font-weight:400;color:#1e2d3d;">6 ГиБ</div>
<div class="t" style="left:317.0px;top:861px;font-size:14px;line-height:14px;font-weight:400;color:#6c6c6c;letter-spacing:0.218px;">Дисковое пространство</div>
<div class="t" style="left:516.0px;top:861px;font-size:14px;line-height:14px;font-weight:400;color:#6c6c6c;letter-spacing:-0.064px;">Публичные IPv4-адреса</div>
<div class="t" style="left:317.0px;top:880px;font-size:14px;line-height:14px;font-weight:400;color:#1e2d3d;">90 ГиБ</div>
<div class="t" style="left:516.0px;top:880px;font-size:14px;line-height:14px;font-weight:400;color:#1e2d3d;">1 Шт.</div>
<div class="t" style="left:317.0px;top:913px;font-size:16px;line-height:16px;font-weight:700;color:#152535;letter-spacing:-0.132px;">899.00 RUB/месяц</div>
<svg style="left:466.1px;top:916px;" width="10" height="7" viewBox="0 0 10 7"><path d="M1 1 L5 5 L9 1" fill="none" stroke="#1e3044" stroke-width="1.4"/></svg>
<div class="abs" style="left:317.0px;top:944px;width:86px;height:40px;background:#1b74e4;border-radius:4px"></div>
<div class="t" style="left:331.0px;top:957px;font-size:14px;line-height:14px;font-weight:400;color:#ffffff;letter-spacing:0.014px;">Заказать</div>
<div class="abs" style="left:742.67px;top:615px;width:430.67px;height:389px;background:#fff;border:1px solid #ececec;border-radius:5px"></div>
<div class="t" style="left:763.67px;top:638px;font-size:15px;line-height:15px;font-weight:700;color:#152535;">DE-E4</div>
<div class="t" style="left:763.67px;top:671px;font-size:14px;line-height:14px;font-weight:400;color:#6c6c6c;letter-spacing:-0.020px;">Дата-центр</div>
<div class="t" style="left:763.67px;top:691px;font-size:14px;line-height:14px;font-weight:400;color:#1e2d3d;letter-spacing:-0.029px;">[Германия] AMD Epyc</div>
<div class="t" style="left:763.67px;top:723px;font-size:14px;line-height:14px;font-weight:400;color:#1e2d3d;letter-spacing:-0.371px;">ЦП: <b>AMD Epyc™</b> до 3.65 GHz</div>
<div class="t" style="left:763.67px;top:739px;font-size:14px;line-height:14px;font-weight:400;color:#1e2d3d;letter-spacing:0.145px;"><b>NVMe</b> накопитель; Виртуализация <b>KVM</b>;</div>
<div class="t" style="left:763.67px;top:755px;font-size:14px;line-height:14px;font-weight:400;color:#1e2d3d;letter-spacing:-0.130px;">Сеть: <b>500 Mbps</b> (burst до <b>1 Gbps</b>)</div>
<div class="t" style="left:763.67px;top:776px;font-size:14px;line-height:14px;font-weight:400;color:#2b7de0;letter-spacing:0.080px;">Развернуть</div>
<div class="t" style="left:763.67px;top:808px;font-size:14px;line-height:14px;font-weight:400;color:#6c6c6c;letter-spacing:0.146px;">Количество процессоров</div>
<div class="t" style="left:962.67px;top:808px;font-size:14px;line-height:14px;font-weight:400;color:#6c6c6c;letter-spacing:0.088px;">Оперативная память</div>
<div class="t" style="left:763.67px;top:828px;font-size:14px;line-height:14px;font-weight:400;color:#1e2d3d;">4 Шт.</div>
<div class="t" style="left:962.67px;top:828px;font-size:14px;line-height:14px;font-weight:400;color:#1e2d3d;">8 ГиБ</div>
<div class="t" style="left:763.67px;top:861px;font-size:14px;line-height:14px;font-weight:400;color:#6c6c6c;letter-spacing:0.218px;">Дисковое пространство</div>
<div class="t" style="left:962.67px;top:861px;font-size:14px;line-height:14px;font-weight:400;color:#6c6c6c;letter-spacing:-0.064px;">Публичные IPv4-адреса</div>
<div class="t" style="left:763.67px;top:880px;font-size:14px;line-height:14px;font-weight:400;color:#1e2d3d;">120 ГиБ</div>
<div class="t" style="left:962.67px;top:880px;font-size:14px;line-height:14px;font-weight:400;color:#1e2d3d;">1 Шт.</div>
<div class="t" style="left:763.67px;top:913px;font-size:16px;line-height:16px;font-weight:700;color:#152535;letter-spacing:-0.129px;">1 199.00 RUB/месяц</div>
<svg style="left:925.93px;top:916px;" width="10" height="7" viewBox="0 0 10 7"><path d="M1 1 L5 5 L9 1" fill="none" stroke="#1e3044" stroke-width="1.4"/></svg>
<div class="abs" style="left:763.67px;top:944px;width:86px;height:40px;background:#1b74e4;border-radius:4px"></div>
<div class="t" style="left:777.67px;top:957px;font-size:14px;line-height:14px;font-weight:400;color:#ffffff;letter-spacing:0.014px;">Заказать</div>
<div class="abs" style="left:1189.34px;top:615px;width:430.67px;height:389px;background:#fff;border:1px solid #ececec;border-radius:5px"></div>
<div class="t" style="left:1210.34px;top:638px;font-size:15px;line-height:15px;font-weight:700;color:#152535;">DE-E5</div>
<div class="t" style="left:1210.34px;top:671px;font-size:14px;line-height:14px;font-weight:400;color:#6c6c6c;letter-spacing:-0.020px;">Дата-центр</div>
<div class="t" style="left:1210.34px;top:691px;font-size:14px;line-height:14px;font-weight:400;color:#1e2d3d;letter-spacing:-0.029px;">[Германия] AMD Epyc</div>
<div class="t" style="left:1210.34px;top:723px;font-size:14px;line-height:14px;font-weight:400;color:#1e2d3d;letter-spacing:-0.371px;">ЦП: <b>AMD Epyc™</b> до 3.65 GHz</div>
<div class="t" style="left:1210.34px;top:739px;font-size:14px;line-height:14px;font-weight:400;color:#1e2d3d;letter-spacing:0.145px;"><b>NVMe</b> накопитель; Виртуализация <b>KVM</b>;</div>
<div class="t" style="left:1210.34px;top:755px;font-size:14px;line-height:14px;font-weight:400;color:#1e2d3d;letter-spacing:-0.130px;">Сеть: <b>500 Mbps</b> (burst до <b>1 Gbps</b>)</div>
<div class="t" style="left:1210.34px;top:776px;font-size:14px;line-height:14px;font-weight:400;color:#2b7de0;letter-spacing:0.080px;">Развернуть</div>
<div class="t" style="left:1210.34px;top:808px;font-size:14px;line-height:14px;font-weight:400;color:#6c6c6c;letter-spacing:0.146px;">Количество процессоров</div>
<div class="t" style="left:1409.34px;top:808px;font-size:14px;line-height:14px;font-weight:400;color:#6c6c6c;letter-spacing:0.088px;">Оперативная память</div>
<div class="t" style="left:1210.34px;top:828px;font-size:14px;line-height:14px;font-weight:400;color:#1e2d3d;">6 Шт.</div>
<div class="t" style="left:1409.34px;top:828px;font-size:14px;line-height:14px;font-weight:400;color:#1e2d3d;">12 ГиБ</div>
<div class="t" style="left:1210.34px;top:861px;font-size:14px;line-height:14px;font-weight:400;color:#6c6c6c;letter-spacing:0.218px;">Дисковое пространство</div>
<div class="t" style="left:1409.34px;top:861px;font-size:14px;line-height:14px;font-weight:400;color:#6c6c6c;letter-spacing:-0.064px;">Публичные IPv4-адреса</div>
<div class="t" style="left:1210.34px;top:880px;font-size:14px;line-height:14px;font-weight:400;color:#1e2d3d;">180 ГиБ</div>
<div class="t" style="left:1409.34px;top:880px;font-size:14px;line-height:14px;font-weight:400;color:#1e2d3d;">1 Шт.</div>
<div class="t" style="left:1210.34px;top:913px;font-size:16px;line-height:16px;font-weight:700;color:#152535;letter-spacing:-0.129px;">1 699.00 RUB/месяц</div>
<svg style="left:1372.6px;top:916px;" width="10" height="7" viewBox="0 0 10 7"><path d="M1 1 L5 5 L9 1" fill="none" stroke="#1e3044" stroke-width="1.4"/></svg>
<div class="abs" style="left:1210.34px;top:944px;width:86px;height:40px;background:#1b74e4;border-radius:4px"></div>
<div class="t" style="left:1224.34px;top:957px;font-size:14px;line-height:14px;font-weight:400;color:#ffffff;letter-spacing:0.014px;">Заказать</div>
</body></html>
